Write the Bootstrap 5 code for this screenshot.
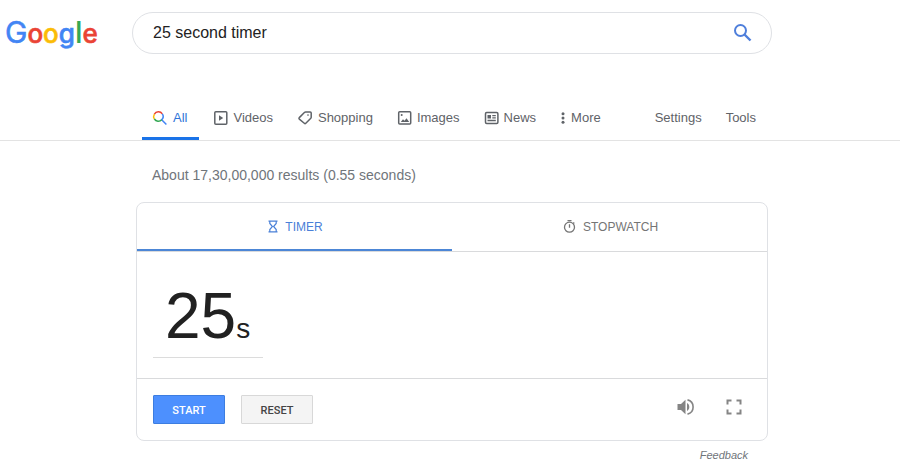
<!DOCTYPE html>
<html lang="en">
<head>
<meta charset="utf-8">
<meta name="viewport" content="width=device-width, initial-scale=1">
<title>25 second timer - Google Search</title>
<link href="https://cdn.jsdelivr.net/npm/bootstrap@5.3.0/dist/css/bootstrap.min.css" rel="stylesheet">
<style>
body { font-family: "Liberation Sans", Arial, sans-serif; font-size: 14px; line-height: 20px; color: #222; background: #fff; }
svg { display: block; flex: none; }
.top-bar { padding: 12px 16px 0 4px; gap: 32px; }
.search-box { flex: 0 1 640px; min-width: 0; height: 42px; border: 1px solid #dfe1e5; border-radius: 21px; padding: 0 19px 0 20px; }
.search-box input { font-size: 16px; line-height: 20px; color: #222; outline: 0; min-width: 0; }
.search-box button { color: #4f7fdb; }
.result-nav { margin-top: 41px; padding-left: 142px; border-bottom: 1px solid #e3e3e3; }
.nav-inner { width: 100%; max-width: 614px; }
.result-nav a { display: flex; align-items: center; font-size: 13px; height: 45px; padding-top: 3px; color: #5f6368; text-decoration: none; border-bottom: 3px solid transparent; }
.result-nav a.current { color: #2f74d8; border-color: #1a73e8; padding: 3px 12px 0 10px; }
.tabs { gap: 24px; }
.tabs a { gap: 5px; }
.tabs a.current { margin-right: -10px; }
.results { max-width: 768px; padding-left: 136px; }
.stats { margin: 24px 0 17px 16px; font-size: 14px; color: #70757a; }
.timer-card { border: 1px solid #dfe1e5; border-radius: 8px; }
.mode-tabs { border-bottom: 1px solid #d9dadc; }
.mode-tabs button { height: 48px; padding: 2px 4px 0 6px; font-size: 12px; color: #757575; gap: 7px; border: 0; border-bottom: 2px solid transparent; background: none; }
.mode-tabs button.current { color: #4a80d8; border-color: #4c86d6; }
.clock { padding: 25px 16px 20px; border-bottom: 1px solid #d9dadc; }
.digits { width: 110px; height: 81px; padding-left: 12px; border-bottom: 1px solid #dcdcdc; color: #212121; font-size: 64px; line-height: 78px; }
.digits small { font-size: 28px; }
.actions { padding: 16px; }
.action-btn { width: 72px; height: 29px; padding: 2px 0 0; border-radius: 1px; font: 500 11px/16px Roboto, sans-serif; }
.start-btn, .start-btn:hover { color: #fff; background: #4d90fe; border-color: #3c7de0; }
.reset-btn, .reset-btn:hover { color: #444; background: #f4f4f4; border-color: #d8d8d8; }
.tool-icons { gap: 24px; color: #858585; margin: 0 5px 5px 0; }
.feedback { font-size: 11px; font-style: italic; color: #70757a; padding: 4px 20px 0 0; }
.feedback a { color: inherit; text-decoration: none; }
</style>
<script src="https://cdn.jsdelivr.net/npm/bootstrap@5.3.0/dist/js/bootstrap.bundle.min.js"></script>
</head>
<body>
<header class="top-bar d-flex align-items-center">
  <a href="#" aria-label="Google home" class="d-block">
    <svg width="96" height="40" viewBox="0 0 96 40" font-family="Inter, sans-serif" font-weight="500" font-size="26" stroke-width=".6"><text x="1" y="30"><tspan font-size="30" font-weight="400" fill="#4285f4" stroke="#4285f4">G</tspan><tspan fill="#ea4335" stroke="#ea4335">o</tspan><tspan fill="#fbbc05" stroke="#fbbc05">o</tspan><tspan fill="#4285f4" stroke="#4285f4">g</tspan><tspan font-size="30" fill="#34a853">l</tspan><tspan fill="#ea4335" stroke="#ea4335">e</tspan></text></svg>
  </a>
  <form class="search-box d-flex align-items-center" role="search" onsubmit="return false">
    <input class="border-0 p-0 flex-grow-1 bg-transparent" type="text" value="25 second timer" aria-label="Search">
    <button class="border-0 bg-transparent p-0" type="submit" aria-label="Search">
      <svg width="20" height="20" viewBox="0 0 20 20" fill="none" stroke="currentColor" stroke-width="2"><circle cx="8.500" cy="7.500" r="5.500"/><path d="M12.500 11.500l6 6" stroke-width="2.400"/></svg>
    </button>
  </form>
</header>

<nav class="result-nav" aria-label="Result types">
  <div class="nav-inner d-flex justify-content-between">
    <div class="tabs d-flex">
      <a href="#" class="current" aria-current="page">
        <svg width="16" height="16" viewBox="0 0 16 16" fill="none" stroke-width="1.500"><path d="M2.400 9A4.600 4.600 0 0 1 2.400 4.200" stroke="#fbbc05"/><path d="M2.400 4.200A4.600 4.600 0 0 1 10.300 3.900" stroke="#ea4335"/><path d="M10.300 3.900A4.600 4.600 0 0 1 9.700 9.800L14.400 14.500" stroke="#4285f4"/><path d="M9.700 9.800A4.600 4.600 0 0 1 2.400 9" stroke="#34a853"/></svg>
        All</a>
      <a href="#">
        <svg width="15" height="16" viewBox="0 0 15 16"><rect x="1.800" y="1.800" width="12" height="12.400" rx="1" fill="none" stroke="currentColor" stroke-width="1.500"/><path d="M6 5.200v5.600L10.200 8z" fill="currentColor"/></svg>
        Videos</a>
      <a href="#">
        <svg width="16" height="16" viewBox="0 0 16 16" fill="none" stroke="currentColor" stroke-width="1.500" stroke-linejoin="round"><path d="M8.700 2h4.500c.7 0 1 .4 1 1v4.200c0 .4-.1.7-.4 1l-5 5.100c-.5.5-1 .5-1.500 0L2.300 9.100c-.5-.5-.5-1 0-1.500l5.100-5.100c.4-.4.8-.5 1.300-.5z"/><circle cx="11" cy="5.100" r=".8" fill="currentColor" stroke="none"/></svg>
        Shopping</a>
      <a href="#">
        <svg width="15" height="16" viewBox="0 0 15 16"><rect x="1.700" y="1.700" width="12" height="12.400" rx="1" fill="none" stroke="currentColor" stroke-width="1.500"/><circle cx="4.700" cy="5" r="1" fill="currentColor"/><path d="M3.800 12l2.200-2.700 1.500 1.500 2-2.500 2.700 3.700z" fill="currentColor"/></svg>
        Images</a>
      <a href="#">
        <svg width="15" height="16" viewBox="0 0 15 16"><rect x="1.500" y="2.500" width="12.400" height="11" rx="1.200" fill="none" stroke="currentColor" stroke-width="1.500"/><path d="M3.500 5h3.500v3.500H3.500zM8.300 5h3.500v1.300H8.300zM8.300 7.300h3.500v1.300H8.300zM3.500 9.800h8.300v1.400H3.500z" fill="currentColor"/></svg>
        News</a>
      <a href="#">
        <svg width="6" height="16" viewBox="0 0 6 16" fill="currentColor"><circle cx="3" cy="3.700" r="1.500"/><circle cx="3" cy="8" r="1.500"/><circle cx="3" cy="12.300" r="1.500"/></svg>
        More</a>
    </div>
    <div class="d-flex gap-4">
      <a href="#">Settings</a>
      <a href="#">Tools</a>
    </div>
  </div>
</nav>

<main class="results">
  <p class="stats">About 17,30,00,000 results (0.55 seconds)</p>
  <section class="timer-card" aria-label="Timer">
    <div class="mode-tabs d-flex" role="tablist">
      <button type="button" role="tab" aria-selected="true" class="current flex-fill w-50 d-flex align-items-center justify-content-center">
        <svg width="10" height="14" viewBox="0 0 10 14" fill="none" stroke="currentColor" stroke-width="1.200"><path d="M.5 1.200h9M.5 11.800h9M1.800 1.200v2.300L4.400 6.500 1.800 9.500v2.300M8.200 1.200v2.300L5.600 6.500l2.600 3v2.300"/></svg>
        TIMER</button>
      <button type="button" role="tab" aria-selected="false" class="flex-fill w-50 d-flex align-items-center justify-content-center">
        <svg width="13" height="14" viewBox="0 0 13 14" fill="none" stroke="currentColor" stroke-width="1.300"><circle cx="6.500" cy="7.200" r="5"/><path d="M4.500.7h4M6.500 4.200v3.500M10.300 2.500l1 1"/></svg>
        STOPWATCH</button>
    </div>
    <div class="clock"><div class="digits">25<small>s</small></div></div>
    <div class="actions d-flex align-items-center gap-3">
      <button type="button" class="btn action-btn start-btn">START</button>
      <button type="button" class="btn action-btn reset-btn">RESET</button>
      <div class="tool-icons d-flex ms-auto">
        <button type="button" class="border-0 bg-transparent p-0 text-reset" aria-label="Sound">
          <svg width="24" height="24" viewBox="0 0 24 24" fill="currentColor"><path d="M3.500 9v6H7l4.500 4.200V4.800L7 9zM13 8v8c1.500-.8 2.300-2.200 2.300-4s-.8-3.200-2.300-4z"/><path d="M13.500 4.900a7.300 7.300 0 0 1 0 14.200" fill="none" stroke="currentColor" stroke-width="1.600"/></svg>
        </button>
        <button type="button" class="border-0 bg-transparent p-0 text-reset" aria-label="Full screen">
          <svg width="24" height="24" viewBox="0 0 24 24" fill="none" stroke="currentColor" stroke-width="2"><path d="M5.500 9.500v-4h4M14.500 5.500h4v4M18.500 14.500v4h-4M9.500 18.500h-4v-4"/></svg>
        </button>
      </div>
    </div>
  </section>
  <div class="feedback text-end"><a href="#">Feedback</a></div>
</main>
</body>
</html>
